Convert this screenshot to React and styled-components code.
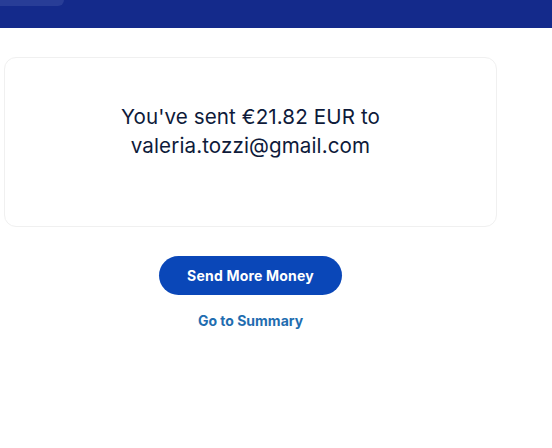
import React from "react";
import styled, { createGlobalStyle } from "styled-components";

const GlobalStyle = createGlobalStyle`
  html, body {
    margin: 0;
    padding: 0;
    background: #ffffff;
    font-family: "Inter", "Liberation Sans", sans-serif;
  }
`;

const Header = styled.div`
  position: relative;
  height: 28px;
  background: #142a8b;
`;

const HeaderTab = styled.div`
  position: absolute;
  left: 0;
  top: 0;
  width: 64px;
  height: 6px;
  background: #283d97;
  border-bottom-right-radius: 8px;
`;

const Content = styled.div`
  width: 493px;
  margin-left: 4px;
  padding-top: 29px;
  display: flex;
  flex-direction: column;
  align-items: center;
`;

const Card = styled.div`
  box-sizing: border-box;
  width: 100%;
  height: 170px;
  border: 1px solid #f0f0f0;
  border-radius: 12px;
  padding-top: 44px;
  text-align: center;
`;

const Message = styled.p`
  margin: 0;
  font-size: 20.6px;
  line-height: 29px;
  letter-spacing: 0.1px;
  color: #0e1a3a;
`;

const PrimaryButton = styled.button`
  margin-top: 29px;
  width: 183px;
  height: 39px;
  border: none;
  border-radius: 20px;
  background: #0a47b8;
  color: #ffffff;
  font-family: inherit;
  font-weight: 700;
  font-size: 14px;
  letter-spacing: 0.2px;
  cursor: pointer;
`;

const LinkButton = styled.a`
  margin-top: 17px;
  color: #1f6db0;
  font-weight: 700;
  font-size: 14px;
  text-decoration: none;
`;

const App = () => {
  return (
    <>
      <GlobalStyle />
      <Header>
        <HeaderTab />
      </Header>
      <Content>
        <Card>
          <Message>
            You've sent €21.82 EUR to
            <br />
            valeria.tozzi@gmail.com
          </Message>
        </Card>
        <PrimaryButton>Send More Money</PrimaryButton>
        <LinkButton href="#">Go to Summary</LinkButton>
      </Content>
    </>
  );
};

export default App;
